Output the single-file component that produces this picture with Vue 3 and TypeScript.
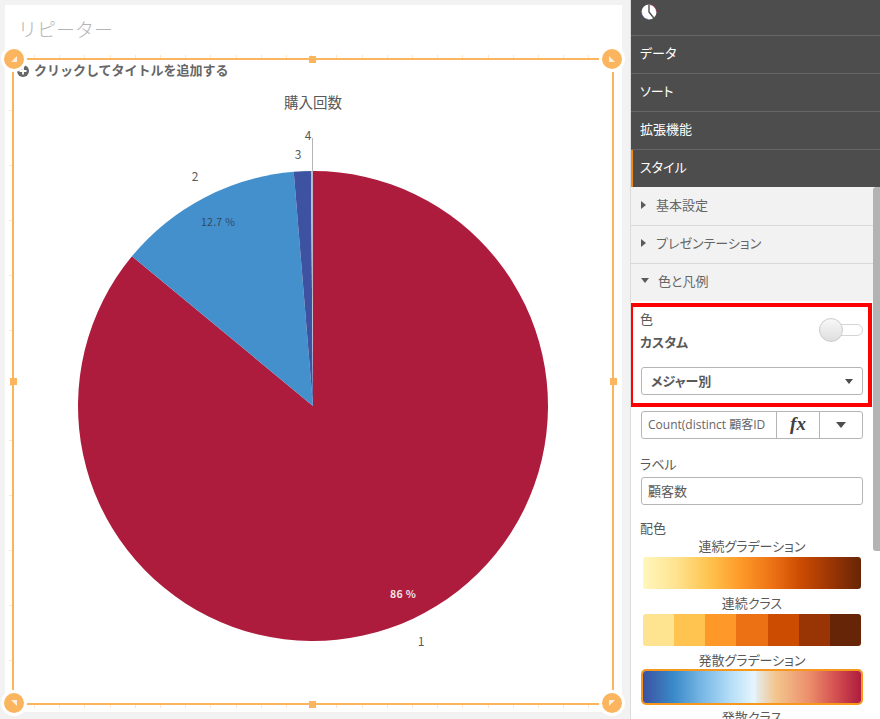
<script setup lang="ts">
const cx = 299, cy = 346, r = 235
function pt(a: number) {
  const t = (a * Math.PI) / 180
  return `${(cx + r * Math.sin(t)).toFixed(2)} ${(cy - r * Math.cos(t)).toFixed(2)}`
}
function wedge(a: number, b: number) {
  const large = b - a > 180 ? 1 : 0
  return `M${cx} ${cy}L${pt(a)}A${r} ${r} 0 ${large} 1 ${pt(b)}Z`
}
const slices = [
  { d: wedge(0, 309.6), c: '#ad1c3c' },
  { d: wedge(309.6, 355.3), c: '#4490cd' },
  { d: wedge(355.3, 359.5), c: '#3d52a1' },
  { d: wedge(359.5, 360), c: '#b9b9c4' },
]
const tabs = ['データ', 'ソート', '拡張機能']
const classes = ['#fee391', '#fec44f', '#fe9929', '#ec7014', '#cc4c02', '#993404', '#662506']
</script>

<template>
  <div class="app">
    <main class="main">
      <section class="card">
        <h1 class="sheet-title">リピーター</h1>
        <div class="frame">
          <i class="ticks ticks-top"></i>
          <i class="ticks ticks-bottom"></i>
          <i class="ticks-side"></i>
          <i class="dot tm"></i><i class="dot bm"></i><i class="dot lm"></i><i class="dot rm"></i>
          <span class="corner tl"><svg viewBox="0 0 10 10"><path d="M2 8L8 2V8Z" /></svg></span>
          <span class="corner tr"><svg viewBox="0 0 10 10"><path d="M2 2L8 8H2Z" /></svg></span>
          <span class="corner bl"><svg viewBox="0 0 10 10"><path d="M2 2H8V8Z" /></svg></span>
          <span class="corner br"><svg viewBox="0 0 10 10"><path d="M2 2H8L2 8Z" /></svg></span>
          <div class="add-title">
            <svg class="plus" viewBox="0 0 12 12"><circle cx="6" cy="6" r="6" fill="#666" /><path d="M6 2.5v7M2.5 6h7" stroke="#fff" stroke-width="1.8" /></svg>
            <span>クリックしてタイトルを追加する</span>
          </div>
          <svg class="chart" viewBox="0 0 600 640" width="600" height="640">
            <text x="299" y="48" class="c-title" text-anchor="middle">購入回数</text>
            <path d="M298.5 78V111" stroke="#b5b5b5" stroke-width="1" fill="none" />
            <path v-for="s in slices" :key="s.c" :d="s.d" :fill="s.c" />
            <text x="294" y="80" class="c-label" text-anchor="middle">4</text>
            <text x="284" y="99" class="c-label" text-anchor="middle">3</text>
            <text x="181" y="121" class="c-label" text-anchor="middle">2</text>
            <text x="407" y="586" class="c-label" text-anchor="middle">1</text>
            <text x="204" y="166" class="c-pct" text-anchor="middle">12.7 %</text>
            <text x="389" y="538" class="c-pct white" text-anchor="middle">86 %</text>
          </svg>
        </div>
      </section>
    </main>

    <aside class="panel">
      <div class="tab tab-icon">
        <svg width="18" height="18" viewBox="0 0 18 18">
          <circle cx="9" cy="9" r="7.5" fill="#fff" />
          <path d="M9 1.5V9L13.8 15" fill="none" stroke="#4d4d4d" stroke-width="1.4" />
          <path d="M10 1.6A7.5 7.5 0 0 1 16.5 9" stroke="#ad1c3c" stroke-width=".6" fill="none" />
          <path d="M1.5 9A7.5 7.5 0 0 0 8 16.4" stroke="#3d52a1" stroke-width=".6" fill="none" />
        </svg>
      </div>
      <div v-for="t in tabs" :key="t" class="tab">{{ t }}</div>
      <div class="tab active">スタイル</div>

      <div class="panel-body">
        <div class="acc"><i class="tri right"></i>基本設定</div>
        <div class="acc second"><i class="tri right"></i>プレゼンテーション</div>
        <div class="acc open"><i class="tri down"></i>色と凡例</div>

        <div class="content">
          <div class="color-head">
            <div>
              <div class="lbl lbl-color">色</div>
              <div class="strong head-strong">カスタム</div>
            </div>
            <div class="switch"><i class="knob"></i></div>
          </div>
          <div class="select">
            <span class="strong">メジャー別</span>
            <i class="tri small"></i>
          </div>
          <div class="expr">
            <span class="expr-text">Count(distinct 顧客ID</span>
            <span class="fx">fx</span>
            <span class="expr-arrow"><i class="tri"></i></span>
          </div>
          <div class="lbl lbl-label">ラベル</div>
          <div class="input">顧客数</div>
          <div class="lbl lbl-scheme">配色</div>

          <div class="sch-title first">連続グラデーション</div>
          <div class="bar grad-seq"></div>
          <div class="sch-title second">連続クラス</div>
          <div class="bar classes">
            <i v-for="c in classes" :key="c" :style="{ background: c }"></i>
          </div>
          <div class="sch-title third">発散グラデーション</div>
          <div class="bar-sel"><div class="grad-div"></div></div>
          <div class="sch-title last">発散クラス</div>
        </div>
      </div>
      <i class="scroll"></i>
      <i class="highlight"></i>
    </aside>
  </div>
</template>

<style>
html, body { margin: 0; background: #f2f2f2; }
</style>

<style scoped>
.app {
  width: 880px; height: 719px; display: flex; overflow: hidden; background: #f2f2f2;
  font-family: "Noto Sans CJK JP", "Noto Sans", sans-serif; color: #595959; font-size: 13px;
}
.main { width: 622px; padding: 5px 0 7px 5px; box-sizing: border-box; flex: none; margin-right: 8px; }
.card { background: #fff; height: 100%; display: flex; flex-direction: column; padding: 0 8px 4px 7px; box-sizing: border-box; }
.sheet-title { margin: 0; height: 53px; box-sizing: border-box; padding: 10px 0 0 6px; font-size: 19px; line-height: 28px; font-weight: 300; color: #b4b4b4; }
.frame { position: relative; flex: 1; border: 2px solid #fbb55f; margin-bottom: 3px; box-sizing: border-box; width: 602px; }
.add-title { display: flex; align-items: center; gap: 5px; padding: 1px 0 0 3px; height: 18px; box-sizing: border-box; font-size: 13px; line-height: 16px; font-weight: 700; color: #666; position: relative; z-index: 1; }
.plus { width: 12px; height: 12px; margin-top: 2px; }
.chart { display: block; position: absolute; left: 0; top: 0; }
.c-title { font-size: 14.5px; fill: #595959; }
.c-label { font-size: 12px; fill: #595959; }
.c-pct { font-size: 10.5px; fill: #2f4a63; letter-spacing: .3px; }
.c-pct.white { fill: #f5e4e8; font-weight: 700; }
.ticks { position: absolute; left: 20px; right: 20px; height: 3px; background: repeating-linear-gradient(90deg, #fde6cb 0 1px, transparent 1px 25.2px); }
.ticks-top { top: -5px; }
.ticks-bottom { bottom: -5px; }
.ticks-side { position: absolute; left: -5px; top: 50px; bottom: 20px; width: 3px; background: repeating-linear-gradient(180deg, #fde6cb 0 1px, transparent 1px 55px); }
.dot { position: absolute; width: 7px; height: 7px; background: #fbb55f; }
.tm { top: -4.5px; left: 295px; }
.bm { bottom: -4.5px; left: 295px; }
.lm { left: -4.5px; top: 318px; }
.rm { right: -4.5px; top: 318px; }
.corner { position: absolute; width: 20px; height: 20px; border-radius: 50%; background: #fbb55f; box-shadow: 0 0 0 3px #fff; display: flex; align-items: center; justify-content: center; z-index: 2; }
.corner svg { width: 10px; height: 10px; }
.corner path { fill: #fdeedd; }
.tl { left: -10px; top: -11px; }
.tr { right: -10px; top: -11px; }
.bl { left: -10px; bottom: -10px; }
.br { right: -10px; bottom: -10px; }

.panel { position: relative; flex: 1; min-width: 0; height: 719px; overflow: hidden; border-left: 1px solid #dcdcdc; box-sizing: border-box; background: #fff; display: flex; flex-direction: column; font-feature-settings: "palt"; }
.tab { height: 38px; box-sizing: border-box; background: #4d4d4d; color: #fff; border-bottom: 1px solid #666; padding-left: 9px; line-height: 34px; font-size: 13px; flex: none; }
.tab-icon { height: 36px; line-height: 0; padding: 3px 0 0 9px; }
.active { border-left: 2px solid #f28c13; border-bottom: 0; padding-left: 7px; height: 37px; }
.panel-body { flex: 1; min-height: 0; }
.acc { height: 39px; box-sizing: border-box; background: #f2f2f2; border-bottom: 1px solid #d9d9d9; display: flex; align-items: center; padding: 0 0 3px 10px; font-size: 13px; color: #666; margin-right: 7px; gap: 9px; }
.acc.second { height: 38px; padding-bottom: 4px; }
.acc.open { border-bottom: 0; height: 37px; padding-bottom: 4px; }
.tri { display: block; width: 0; height: 0; border-style: solid; border-width: 5px 4.5px 0; border-color: #4d4d4d transparent transparent; }
.tri.right { border-width: 4px 0 4px 5px; border-color: transparent transparent transparent #5b5b5b; margin-right: 1px; }
.tri.down { border-width: 5px 4px 0; border-color: #5b5b5b transparent transparent; }
.tri.small { border-width: 5px 4px 0; }
.content { padding: 9px 10px 0 10px; width: 242px; box-sizing: border-box; }
.lbl { font-size: 13px; line-height: 18px; color: #595959; margin-left: -1px; }
.strong { font-weight: 700; font-size: 13px; line-height: 18px; color: #595959; }
.head-strong { margin-left: -1px; }
.color-head { display: flex; justify-content: space-between; height: 57px; }
.lbl-color { margin-bottom: 5px; }
.switch { width: 32px; height: 12px; margin-top: 14px; position: relative; border: 1px solid #d5d5d5; border-radius: 7px; box-sizing: border-box; margin-left: auto; }
.knob { position: absolute; left: -13px; top: -7px; width: 24px; height: 24px; box-sizing: border-box; border-radius: 50%; border: 1px solid #ccc; background: linear-gradient(#f8f8f8, #dedede); }
.select { height: 28px; box-sizing: border-box; border: 1px solid #b5b5b5; border-radius: 3px; display: flex; align-items: center; justify-content: space-between; padding: 0 9px 0 9px; background: #fff; }
.expr { margin-top: 16px; height: 28px; box-sizing: border-box; border: 1px solid #b5b5b5; border-radius: 3px; display: flex; align-items: stretch; line-height: 26px; }
.expr-text { width: 134px; flex: none; overflow: hidden; white-space: nowrap; padding-left: 6px; box-sizing: border-box; color: #666; font-family: "Open Sans", "Noto Sans CJK JP", sans-serif; font-size: 12px; }
.fx { width: 44px; flex: none; border-left: 1px solid #b5b5b5; border-right: 1px solid #b5b5b5; box-sizing: border-box; text-align: center; font-family: "Liberation Serif", serif; font-style: italic; font-weight: 700; font-size: 19px; color: #404040; line-height: 24px; }
.expr-arrow { flex: 1; display: flex; align-items: center; justify-content: center; }
.expr-arrow .tri { border-width: 6px 5px 0; }
.lbl-label { margin-top: 16px; height: 22px; line-height: 18px; }
.input { height: 28px; box-sizing: border-box; border: 1px solid #b5b5b5; border-radius: 3px; padding-left: 6px; line-height: 26px; }
.lbl-scheme { margin-top: 14px; line-height: 18px; height: 18px; }
.sch-title { text-align: center; line-height: 17px; height: 17px; font-size: 13px; color: #595959; }
.sch-title.first { height: 20px; }
.sch-title.second { margin-top: 5px; height: 20px; }
.sch-title.third { margin-top: 5px; height: 18px; }
.sch-title.last { margin-top: 3px; }
.bar { height: 32px; margin: 0 2px; border-radius: 3px; overflow: hidden; }
.grad-seq { background: linear-gradient(90deg, #fff7bc, #fee391 15%, #fec44f 30%, #fe9929 45%, #ec7014 60%, #cc4c02 72%, #993404 87%, #662506); }
.classes { display: flex; }
.classes i { flex: 1; display: block; }
.bar-sel { height: 36px; box-sizing: border-box; border: 2px solid #f7981d; border-radius: 5px; overflow: hidden; margin-top: 0; }
.grad-div { height: 100%; background: linear-gradient(90deg, #3d52a1, #3a89c9 14%, #77b7e5 27%, #b4ddf7 40%, #e6f5fe 51%, #e6e6e0 53%, #f3c58d 61%, #ec8f6c 76%, #d24d4f 89%, #ae1c3e); }
.scroll { position: absolute; right: 0; top: 187px; width: 7px; height: 364px; background: #b3b3b3; border-radius: 3px 0 0 3px; }
.highlight { position: absolute; left: -2px; top: 303px; width: 243px; height: 104px; box-sizing: border-box; border: 4px solid #f00; }
</style>
